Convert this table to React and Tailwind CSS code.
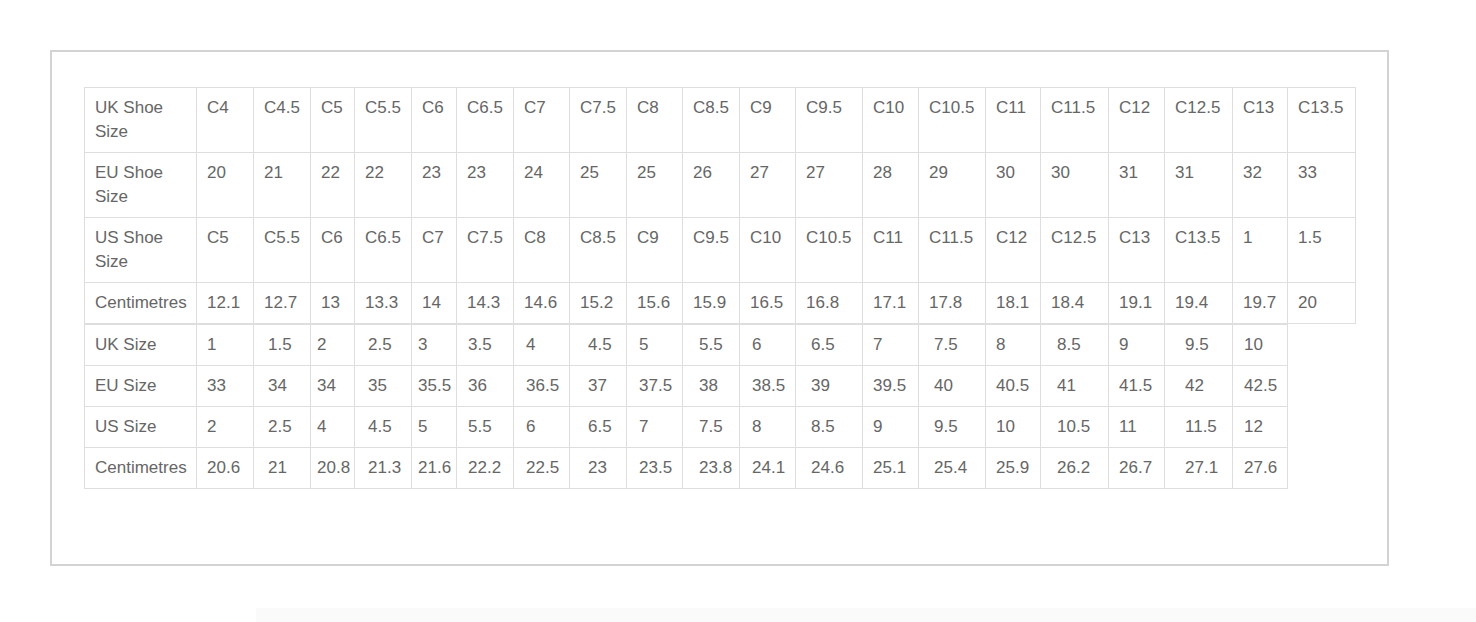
import React from "react";

// 아동 신발 사이즈 표 (C 사이즈)
const kidsRows = [
  ["UK Shoe Size", "C4", "C4.5", "C5", "C5.5", "C6", "C6.5", "C7", "C7.5", "C8", "C8.5", "C9", "C9.5", "C10", "C10.5", "C11", "C11.5", "C12", "C12.5", "C13", "C13.5"],
  ["EU Shoe Size", "20", "21", "22", "22", "23", "23", "24", "25", "25", "26", "27", "27", "28", "29", "30", "30", "31", "31", "32", "33"],
  ["US Shoe Size", "C5", "C5.5", "C6", "C6.5", "C7", "C7.5", "C8", "C8.5", "C9", "C9.5", "C10", "C10.5", "C11", "C11.5", "C12", "C12.5", "C13", "C13.5", "1", "1.5"],
  ["Centimetres", "12.1", "12.7", "13", "13.3", "14", "14.3", "14.6", "15.2", "15.6", "15.9", "16.5", "16.8", "17.1", "17.8", "18.1", "18.4", "19.1", "19.4", "19.7", "20"],
];

// 큰 사이즈 표
const youthRows = [
  ["UK Size", "1", "1.5", "2", "2.5", "3", "3.5", "4", "4.5", "5", "5.5", "6", "6.5", "7", "7.5", "8", "8.5", "9", "9.5", "10"],
  ["EU Size", "33", "34", "34", "35", "35.5", "36", "36.5", "37", "37.5", "38", "38.5", "39", "39.5", "40", "40.5", "41", "41.5", "42", "42.5"],
  ["US Size", "2", "2.5", "4", "4.5", "5", "5.5", "6", "6.5", "7", "7.5", "8", "8.5", "9", "9.5", "10", "10.5", "11", "11.5", "12"],
  ["Centimetres", "20.6", "21", "20.8", "21.3", "21.6", "22.2", "22.5", "23", "23.5", "23.8", "24.1", "24.6", "25.1", "25.4", "25.9", "26.2", "26.7", "27.1", "27.6"],
];

// 두 번째 표는 칸마다 글자 시작 위치가 조금씩 다름
const youthPad = [
  "pl-[10px]", "pl-[10px]", "pl-[14px]", "pl-[6px]", "pl-[13px]", "pl-[6px]", "pl-[11px]", "pl-[12px]", "pl-[18px]", "pl-[12px]",
  "pl-[16px]", "pl-[12px]", "pl-[15px]", "pl-[10px]", "pl-[15px]", "pl-[10px]", "pl-[16px]", "pl-[10px]", "pl-[20px]", "pl-[11px]",
];

const cell = "border-r border-b border-[#dedede] py-[8px] leading-[24px]";

export default function App() {
  return (
    <div
      className="min-h-[622px] bg-white pt-[50px] pl-[50px] text-[17px] text-[#666]"
      style={{ fontFamily: '"Liberation Sans", Arial, sans-serif' }}
    >
      <div className="w-[1339px] h-[516px] border-2 border-[#d3d3d3] pt-[35px] pl-[32px]">
        {/* 첫 번째 표 */}
        <div className="grid w-fit grid-cols-[112px_57px_57px_44px_57px_45px_57px_56px_57px_56px_57px_56px_67px_56px_67px_55px_68px_56px_68px_55px_68px] border-l border-t border-[#dedede]">
          {kidsRows.map((row, r) =>
            row.map((v, c) => (
              <div
                key={`k-${r}-${c}`}
                className={`${cell} pl-[10px] ${c === 0 ? "pr-[10px]" : "whitespace-nowrap"}`}
              >
                {v}
              </div>
            ))
          )}
        </div>

        {/* 두 번째 표 */}
        <div className="grid w-fit grid-cols-[112px_57px_57px_44px_57px_45px_57px_56px_57px_56px_57px_56px_67px_56px_67px_55px_68px_56px_68px_55px] border-l border-t border-[#dedede]">
          {youthRows.map((row, r) =>
            row.map((v, c) => (
              <div key={`y-${r}-${c}`} className={`${cell} ${youthPad[c]} whitespace-nowrap`}>
                {v}
              </div>
            ))
          )}
        </div>
      </div>

      <div className="mt-[42px] ml-[206px] h-[14px] bg-[#fafafa]" />
    </div>
  );
}
